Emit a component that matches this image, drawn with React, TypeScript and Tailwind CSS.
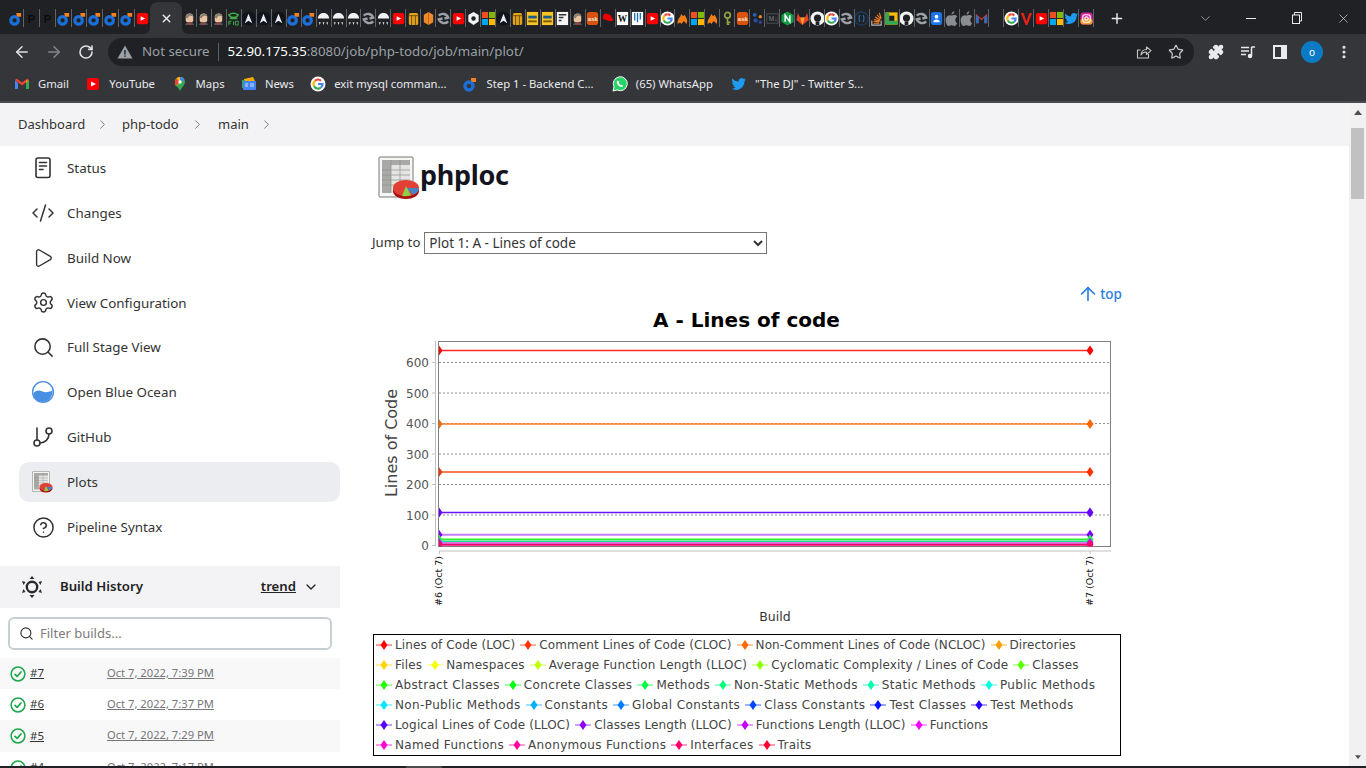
import React from 'react';
import {
  ArrowLeft,
  ArrowRight,
  ArrowUp,
  ChevronDown,
  ChevronRight,
  CircleHelp,
  CodeXml,
  GitBranch,
  MoreVertical,
  Play,
  Plus,
  Puzzle,
  RotateCw,
  Search,
  Settings,
  Star,
  X,
} from 'lucide-react';

type Kind = string;

// tab strip favicons, left of the active tab and right of it
const leftTabs: Kind[] = ['do', 'p', 'p', 'do', 'do', 'do', 'do', 'do', 'yt'];
const rightTabs: Kind[] = [
  'jenkins', 'jenkins', 'jenkins', 'frog', 'arch', 'arch', 'arch', 'do', 'do', 'dome', 'dome', 'dome', 'swirl', 'dome',
  'yt', 'barrel', 'cylinder', 'swirl', 'yt', 'gear', 'ms', 'arch', 'barrel', 'card', 'card', 'doc', 'jenkins', 'ask',
  'redhat', 'wiki', 'blueDoc', 'yt', 'g', 'flame', 'ms', 'flame', 'key', 'ask', 'dots', 'darkM', 'nginx', 'fox', 'github',
  'g', 'swirl', 'brackets', 'stack', 'gsquare', 'github', 'swirl', 'person', 'apple', 'apple', 'gmail2', 'blank', 'g',
  'vee', 'yt', 'ms', 'twitter', 'insta',
];

function Favicon({ kind, size = 16 }: { kind: Kind; size?: number }) {
  const body = () => {
    switch (kind) {
      case 'do':
        return (
          <>
            <circle cx="7" cy="10" r="4" fill="none" stroke="#1b6fd8" strokeWidth="3.4" />
            <path d="M9 2h5v4h-3a2 2 0 0 1-2-2z" fill="#f5801f" />
          </>
        );
      case 'p':
        return <text x="4" y="13" fontSize="12" fontWeight="700" fill="#0b0c0e" fontFamily="Liberation Sans">P</text>;
      case 'yt':
        return (
          <>
            <rect x="2" y="2" width="12" height="12" rx="2" fill="#f00" />
            <path d="M6 5.5l5 2.5-5 2.5z" fill="#fff" />
          </>
        );
      case 'jenkins':
        return (
          <>
            <path d="M4 6c0-4 8-5 8 0v4c0 3-8 3-8 0z" fill="#e9c4a4" />
            <path d="M4 7c0-5 8-6 8-1-3-2-5-1-6 2z" fill="#8a8070" />
            <path d="M3 15l2-3h6l2 3z" fill="#555" />
            <path d="M7 12h2v3H7z" fill="#c33" />
          </>
        );
      case 'frog':
        return (
          <>
            <path d="M3 4c3-2 7-2 10 0-1 2-3 3-5 3S4 6 3 4zM4 8h8" fill="none" stroke="#3fae49" strokeWidth="1.6" />
            <path d="M3 11v4m0-4h3m-3 2h2m3-2v4m2-4h3v4h-3z" fill="none" stroke="#3fae49" strokeWidth="1" />
          </>
        );
      case 'arch':
        return (
          <>
            <circle cx="8" cy="8" r="7.4" fill="#11151b" />
            <path d="M8 3l4 10-4-2.5L4 13z" fill="#e8edf2" />
          </>
        );
      case 'dome':
        return (
          <>
            <path d="M2 8c0-8 12-8 12 0z" fill="#f2f2f2" />
            <path d="M3 12h2l-1 3zm4 0h2l-1 3zm4 0h2l-1 3z" fill="#e6e6e6" />
          </>
        );
      case 'swirl':
        return (
          <>
            <path d="M3 5a6 6 0 0 1 10 2l-4 1M13 11a6 6 0 0 1-10-2l4-1" fill="none" stroke="#9aa0a6" strokeWidth="2.6" />
          </>
        );
      case 'barrel':
        return (
          <>
            <rect x="3" y="2" width="10" height="13" rx="2" fill="#e2a21b" />
            <path d="M3 5h10M6 5v10M10 5v10" stroke="#6b4b08" strokeWidth="1" />
          </>
        );
      case 'cylinder':
        return (
          <>
            <path d="M3 4l5-3 5 3v8l-5 3-5-3z" fill="#ef8a2c" />
            <path d="M8 1v14" stroke="#c4661a" strokeWidth="1" />
          </>
        );
      case 'gear':
        return (
          <>
            <path d="M8 1l5.5 3.2v7.1L8 15l-5.500-3.700V4.200z" fill="#f2f2f2" />
            <circle cx="8" cy="8" r="2.400" fill="#202124" />
          </>
        );
      case 'ms':
        return (
          <>
            <rect x="1" y="1" width="6.500" height="6.500" fill="#f25022" />
            <rect x="8.500" y="1" width="6.500" height="6.500" fill="#7fba00" />
            <rect x="1" y="8.500" width="6.500" height="6.500" fill="#00a4ef" />
            <rect x="8.500" y="8.500" width="6.500" height="6.500" fill="#ffb900" />
          </>
        );
      case 'card':
        return (
          <>
            <rect x="2" y="1" width="12" height="14" fill="#f7c325" />
            <rect x="3.500" y="5" width="9" height="3" fill="#1c5d8a" />
            <rect x="3.500" y="10" width="9" height="2" fill="#7a5a10" />
          </>
        );
      case 'doc':
        return (
          <>
            <rect x="2" y="1" width="12" height="14" fill="#f4f4f4" />
            <path d="M4 4h8M4 7h5M4 10h3" stroke="#333" strokeWidth="1.600" />
          </>
        );
      case 'ask':
        return (
          <>
            <rect x="2" y="1" width="12" height="14" rx="3" fill="#d9530f" />
            <text x="3" y="11" fontSize="6.500" fontWeight="700" fill="#ffe4d0" fontFamily="Liberation Sans">ask</text>
          </>
        );
      case 'redhat':
        return <path d="M3 8c0-5 2-6 4-5s4 0 5 3c1 2 2 2 2 3 0 2-3 2-6 1-3-1-5-1-5-2z" fill="#e00" />;
      case 'wiki':
        return (
          <>
            <rect x="2" y="1" width="12" height="14" fill="#fff" />
            <text x="3" y="12" fontSize="10" fontWeight="700" fill="#111" fontFamily="Liberation Serif">W</text>
          </>
        );
      case 'blueDoc':
        return (
          <>
            <rect x="2" y="1" width="12" height="14" fill="#fff" />
            <path d="M5 2v8M8 2v10M11 2v7" stroke="#1c6fb8" strokeWidth="1.400" />
          </>
        );
      case 'g':
        return (
          <>
            <circle cx="8" cy="8" r="7.500" fill="#fff" />
            <path d="M8 3.500a4.500 4.500 0 0 1 3 1.200" fill="none" stroke="#ea4335" strokeWidth="2.200" />
            <path d="M5 4.700A4.500 4.500 0 0 0 4 10" fill="none" stroke="#fbbc05" strokeWidth="2.200" />
            <path d="M4 10a4.500 4.500 0 0 0 7 1.500" fill="none" stroke="#34a853" strokeWidth="2.200" />
            <path d="M8 8h4.500a4.500 4.500 0 0 1-1.500 3.500" fill="none" stroke="#4285f4" strokeWidth="2.200" />
            <path d="M8 3.500A4.500 4.500 0 0 0 5 4.700" fill="none" stroke="#ea4335" strokeWidth="2.200" />
          </>
        );
      case 'flame':
        return <path d="M3 14c-1-5 2-6 4-11 1 3 2 3 3 1 3 4 4 7 2 10-1-2-2-3-3-3-1 1-1 2-2 3-1-2-2-2-4 0z" fill="#f07d1a" />;
      case 'key':
        return (
          <>
            <circle cx="8" cy="4.500" r="3" fill="none" stroke="#8fa33f" strokeWidth="1.800" />
            <path d="M8 7v8m0-3h3m-3 2h2" stroke="#8fa33f" strokeWidth="1.800" />
          </>
        );
      case 'dots':
        return (
          <>
            <circle cx="5" cy="4" r="2" fill="#2466c2" />
            <circle cx="11" cy="6" r="1.800" fill="#e98a1f" />
            <circle cx="6" cy="10" r="2.200" fill="#2c4aa8" />
            <circle cx="11" cy="12" r="1.800" fill="#254a9a" />
          </>
        );
      case 'darkM':
        return (
          <>
            <rect x="2" y="3" width="12" height="10" fill="none" stroke="#4d5156" strokeWidth="1" />
            <text x="4" y="11" fontSize="7" fill="#80868b" fontFamily="Liberation Sans">M↓</text>
          </>
        );
      case 'nginx':
        return (
          <>
            <path d="M8 0.500l6.500 3.700v7.600L8 15.500l-6.500-3.700V4.200z" fill="#129a46" />
            <path d="M5.500 11.500v-7l5 7v-7" fill="none" stroke="#fff" strokeWidth="1.600" />
          </>
        );
      case 'fox':
        return (
          <>
            <path d="M8 15L1.500 9.500 3 2l2.500 5h5L13 2l1.500 7.500z" fill="#e24329" />
            <path d="M8 15L5.500 7h5z" fill="#fca326" />
          </>
        );
      case 'github':
        return (
          <>
            <circle cx="8" cy="8" r="7.500" fill="#f2f2f2" />
            <circle cx="8" cy="7.500" r="3.800" fill="#202124" />
            <path d="M6 15v-4h4v4z" fill="#202124" />
          </>
        );
      case 'brackets':
        return (
          <>
            <circle cx="8" cy="8" r="7" fill="none" stroke="#1c3a5c" strokeWidth="1.500" />
            <path d="M6.500 4.500C5 6 5 10 6.500 11.500M9.500 4.500c1.500 1.500 1.500 5.500 0 7" fill="none" stroke="#2a6fb0" strokeWidth="1.200" />
          </>
        );
      case 'stack':
        return (
          <>
            <path d="M3 10v5h10v-5" fill="none" stroke="#bcbbbb" strokeWidth="1.200" />
            <path d="M5 13h6M5 11l6 .6M5.500 9l6 1.500M6.500 6.500l5.500 3M8.500 4l4 4.500M11 2l2 6" stroke="#f48024" strokeWidth="1.200" />
          </>
        );
      case 'gsquare':
        return (
          <>
            <rect x="1.500" y="1.500" width="13" height="13" fill="#fbbc05" />
            <path d="M1.500 14.500h13v-4h-9v-9h-4z" fill="#34a853" />
            <rect x="5.500" y="5" width="5.500" height="5.500" fill="#202124" />
          </>
        );
      case 'person':
        return (
          <>
            <rect x="2" y="1" width="12" height="14" rx="3" fill="#1a73e8" />
            <circle cx="8" cy="6" r="2" fill="#fff" />
            <path d="M4.500 12c0-4 7-4 7 0z" fill="#fff" />
          </>
        );
      case 'apple':
        return (
          <>
            <path d="M8 5c2-1 5-1 6 1-3 2-2 6 0 7-1 2-2 3-3 3s-2-.7-3-.7-2 .7-3 .7C3 16 1 11 2 8c1-3 4-4 6-3z" fill="#8a8d91" />
            <path d="M8 4c0-2 1-3 3-4 0 2-1 3-3 4z" fill="#8a8d91" />
          </>
        );
      case 'gmail2':
        return (
          <>
            <path d="M2 3v10h3V7l3 3 3-3v6h3V3l-6 5z" fill="#c5392f" />
            <path d="M2 13h3V7L2 4zM14 13h-3V7l3-3z" fill="#2f6fc4" />
          </>
        );
      case 'gmail':
        return (
          <>
            <path d="M1 4v9h3V7z" fill="#4285f4" />
            <path d="M15 4v9h-3V7z" fill="#34a853" />
            <path d="M1 4l7 5.500L15 4l-1.500-1.500L8 6.500 2.500 2.500z" fill="#ea4335" />
            <path d="M12 7l3-3v0l-3 1z" fill="#fbbc05" />
          </>
        );
      case 'vee':
        return <path d="M2 2h3l3 9 3-9h3l-5 13H7z" fill="#e0231c" />;
      case 'twitter':
        return <path d="M15 3.500c-.5.300-1.100.400-1.700.500.600-.400 1-1 1.300-1.700-.600.400-1.200.600-1.900.700a3 3 0 0 0-5.100 2.700C5 5.600 2.800 4.400 1.400 2.600c-.8 1.400-.4 3.100 1 4-.500 0-1-.100-1.400-.400 0 1.500 1 2.700 2.400 3-.400.100-.900.100-1.300 0 .400 1.200 1.500 2 2.800 2.100A6 6 0 0 1 .5 12.600a8.500 8.500 0 0 0 13-7.500c.600-.400 1.100-1 1.500-1.600z" fill="#1d9bf0" />;
      case 'insta':
        return (
          <>
            <rect x="1.500" y="1.500" width="13" height="13" rx="3.500" fill="#d6249f" />
            <rect x="1.500" y="8" width="13" height="6.500" rx="3" fill="#fd9a2a" />
            <rect x="4" y="4" width="8" height="8" rx="2.400" fill="none" stroke="#fff" strokeWidth="1.200" />
            <circle cx="8" cy="8" r="1.800" fill="none" stroke="#fff" strokeWidth="1.200" />
          </>
        );
      case 'maps':
        return (
          <>
            <path d="M8 1a5 5 0 0 1 5 5c0 3-3 5-5 9-2-4-5-6-5-9a5 5 0 0 1 5-5z" fill="#34a853" />
            <path d="M8 1a5 5 0 0 1 4 2L4 10C3.500 9 3 7.500 3 6a5 5 0 0 1 5-5z" fill="#fbbc05" />
            <path d="M8 1a5 5 0 0 1 4.500 3L8 6z" fill="#4285f4" />
            <path d="M4.500 2.500L8 6 4 9.500A5 5 0 0 1 4.500 2.500z" fill="#ea4335" />
            <circle cx="8" cy="6" r="1.700" fill="#fff" />
          </>
        );
      case 'news':
        return (
          <>
            <path d="M3 3l9-2 2 4H3z" fill="#f9ab00" />
            <rect x="1" y="4" width="3" height="8" fill="#34a853" />
            <rect x="2" y="5" width="13" height="9" rx="1" fill="#4285f4" />
            <path d="M4 8h3M4 10h3M9 8h4M9 10h4" stroke="#cfe0fc" strokeWidth="1" />
          </>
        );
      case 'whatsapp':
        return (
          <>
            <path d="M1 15l1-4.200A7 7 0 1 1 5.200 14z" fill="#25d366" stroke="#fff" strokeWidth="1" />
            <path d="M5.500 4.500c-1.500 1.500-.5 3.500 1 5s3.500 2 4.700.500l-1.500-1.300-1 .500C7.700 8.300 7 7.700 6.700 6.700l.6-.9z" fill="#fff" />
          </>
        );
      default:
        return null;
    }
  };
  return (
    <svg width={size} height={size} viewBox="0 0 16 16" className="shrink-0">
      {body()}
    </svg>
  );
}

function TabSlot({ kind, wide }: { kind: Kind; wide?: boolean }) {
  return (
    <div className={wide ? 'flex h-full w-[15.9px] items-center justify-center' : 'flex h-full w-[14.96px] items-center justify-center'}>
      <div className="flex h-[18px] w-full items-center justify-center border-r border-[#5f6368]">
        <div className="flex w-[14px] justify-center overflow-hidden">
          <Favicon kind={kind} size={15} />
        </div>
      </div>
    </div>
  );
}

function TabStrip() {
  return (
    <div className="flex h-[34px] shrink-0 items-center bg-[#202124] pt-[2px] pl-[8px]">
      {leftTabs.map((k, i) => (
        <TabSlot key={i} kind={k} wide />
      ))}
      <div className="relative ml-[-1px] flex h-[32px] w-[32px] items-center justify-center self-end rounded-t-[8px] bg-[#35363a]">
        <X size={13} color="#e8eaed" strokeWidth={2.5} />
        <span className="absolute bottom-0 left-[-6px] h-[6px] w-[6px] bg-[#35363a]">
          <span className="block h-full w-full rounded-br-[6px] bg-[#202124]" />
        </span>
        <span className="absolute right-[-6px] bottom-0 h-[6px] w-[6px] bg-[#35363a]">
          <span className="block h-full w-full rounded-bl-[6px] bg-[#202124]" />
        </span>
      </div>
      {rightTabs.map((k, i) => (
        <TabSlot key={i} kind={k} />
      ))}
      <div className="ml-[15px] flex w-[16px] justify-center">
        <Plus size={17} color="#e8eaed" strokeWidth={2.2} />
      </div>
      <div className="ml-auto flex h-full items-center text-[#d5d7da]">
        <div className="flex w-[46px] justify-center">
          <ChevronDown size={15} strokeWidth={1} />
        </div>
        <div className="flex w-[46px] justify-center">
          <div className="h-px w-[10px] bg-[#e8eaed]" />
        </div>
        <div className="flex w-[46px] justify-center">
          <svg width="12" height="12" viewBox="0 0 12 12" fill="none" stroke="#e8eaed">
            <rect x="1.500" y="3" width="7" height="8.500" />
            <path d="M3.500 3V.5h7v8.500H8.500" />
          </svg>
        </div>
        <div className="flex w-[46px] justify-center">
          <X size={15} strokeWidth={1} color="#e8eaed" />
        </div>
      </div>
    </div>
  );
}

function Toolbar() {
  return (
    <div className="flex h-[33px] shrink-0 items-center bg-[#35363a] pt-[3px]">
      <div className="flex w-[108px] items-center pl-[13px] text-[#dee1e6]">
        <ArrowLeft size={18} strokeWidth={2} />
        <ArrowRight size={18} strokeWidth={2} className="ml-[14px] text-[#83868a]" />
        <RotateCw size={16} strokeWidth={2.4} className="ml-[15px]" />
      </div>
      <div className="flex h-[28px] w-[1086px] items-center rounded-full bg-[#202124] pl-[9px] text-[13.300px]">
        <svg width="16" height="16" viewBox="0 0 16 16">
          <path d="M8 1.500l7.500 13H.5z" fill="#9aa0a6" />
          <path d="M8 6v4.500M8 11.500v1.300" stroke="#202124" strokeWidth="1.400" />
        </svg>
        <span className="ml-[9px] text-[#9aa0a6]">Not secure</span>
        <span className="mx-[8px] h-[18px] w-px bg-[#5f6368]" />
        <span className="ml-[1px] text-white">52.90.175.35</span>
        <span className="text-[#9aa0a6]">:8080/job/php-todo/job/main/plot/</span>
        <div className="ml-auto flex items-center pr-[10px] text-[#c4c7c5]">
          <svg width="16" height="16" viewBox="0 0 16 16" fill="none" stroke="#c4c7c5" strokeWidth="1.100" strokeLinejoin="round">
            <path d="M12.500 10v4h-11V6h3" />
            <path d="M5 11c0-3.500 2.500-5.500 5.500-5.500V3L15 6.700l-4.500 3.800V8C8 8 6 9 5 11z" />
          </svg>
          <Star size={16} strokeWidth={1.8} className="ml-[16px]" />
        </div>
      </div>
      <div className="flex flex-1 items-center text-[#e8eaed]">
        <Puzzle size={16} fill="#e8eaed" className="ml-[14px]" />
        <svg width="16" height="16" viewBox="0 0 16 16" className="ml-[16px]" stroke="#e8eaed" fill="none" strokeWidth="1.500">
          <path d="M1 3.500h8M1 7h8M1 10.500h5M11.500 3v9" />
          <circle cx="10" cy="12" r="1.500" fill="#e8eaed" />
          <path d="M11.500 3H15" />
        </svg>
        <svg width="14" height="14" viewBox="0 0 14 14" className="ml-[17px]">
          <path d="M0 0h14v14H0z" fill="#e8eaed" />
          <path d="M2 2h6v10H2z" fill="#35363a" />
        </svg>
        <div className="ml-[14px] flex h-[22px] w-[22px] items-center justify-center rounded-full bg-[#0b7ac4] text-[10px] text-white">o</div>
        <MoreVertical size={16} strokeWidth={2.6} className="ml-[13px]" />
      </div>
    </div>
  );
}

const bookmarks = [
  { icon: 'gmail', label: 'Gmail', w: 'w-[31px]' },
  { icon: 'yt', label: 'YouTube', w: 'w-[46px]' },
  { icon: 'maps', label: 'Maps', w: 'w-[29px]' },
  { icon: 'news', label: 'News', w: 'w-[29px]' },
  { icon: 'g', label: 'exit mysql comman...', w: 'w-[112px]' },
  { icon: 'do', label: 'Step 1 - Backend C...', w: 'w-[109px]' },
  { icon: 'whatsapp', label: '(65) WhatsApp', w: 'w-[79px]' },
  { icon: 'twitter', label: '"The DJ" - Twitter S...', w: 'w-[111px]' },
];

function Bookmarks() {
  return (
    <div className="flex h-[34px] shrink-0 items-center gap-[16.300px] bg-[#35363a] pl-[14px] text-[11.300px] text-[#e8eaed]">
      {bookmarks.map((b) => (
        <div key={b.label} className="flex items-center gap-[8px]">
          <Favicon kind={b.icon} />
          <span className={`${b.w} whitespace-nowrap`}>{b.label}</span>
        </div>
      ))}
    </div>
  );
}

function PlotIcon({ size }: { size: number }) {
  return (
    <svg width={size} height={size} viewBox="0 0 44 44" className="shrink-0">
      <rect x="1" y="1" width="34" height="40" rx="1" fill="#f6f6f4" stroke="#77786f" strokeWidth="1" />
      <rect x="4" y="4" width="28" height="33" fill="#e4e4e2" />
      <rect x="4" y="4" width="9" height="33" fill="#a9a9a7" />
      <rect x="4" y="4" width="28" height="5" fill="#a9a9a7" />
      <path d="M4 14h28M4 19h28M4 24h28M4 29h28M13 4v33M22 4v33" stroke="#8f8f8d" strokeWidth="0.700" />
      <ellipse cx="28" cy="35" rx="13" ry="8" fill="#a80f0f" />
      <ellipse cx="28" cy="32" rx="13" ry="8" fill="#e24037" />
      <path d="M28 32l13 0a13 8 0 0 1-6 6.800z" fill="#4a82c4" />
      <path d="M28 30l5 9.500a13 8 0 0 1-9 .5z" fill="#8ed04a" />
    </svg>
  );
}

function StatusIcon() {
  return (
    <svg width="24" height="24" viewBox="0 0 24 24" fill="none" stroke="#333" strokeWidth="1.600" strokeLinecap="round">
      <rect x="5" y="2" width="14" height="19.500" rx="2" />
      <path d="M8.500 6.500h7M8.500 10h7M8.500 13.500h3.500" />
    </svg>
  );
}

function OceanIcon() {
  return (
    <svg width="24" height="24" viewBox="0 0 24 24">
      <circle cx="12" cy="12" r="10.400" fill="#fff" stroke="#4a90e2" strokeWidth="1.400" />
      <path d="M2.500 13c3-3 6-3 9-1.500s6 .5 10-1c.500 6-4 11.500-9.500 11.500S2.500 18 2.500 13z" fill="#4a90e2" />
    </svg>
  );
}

const navItems = [
  { label: 'Status', icon: <StatusIcon /> },
  { label: 'Changes', icon: <CodeXml size={24} strokeWidth={1.5} color="#333" /> },
  { label: 'Build Now', icon: <Play size={22} strokeWidth={1.5} color="#333" /> },
  { label: 'View Configuration', icon: <Settings size={23} strokeWidth={1.5} color="#333" /> },
  { label: 'Full Stage View', icon: <Search size={23} strokeWidth={1.6} color="#333" /> },
  { label: 'Open Blue Ocean', icon: <OceanIcon /> },
  { label: 'GitHub', icon: <GitBranch size={24} strokeWidth={1.6} color="#333" /> },
  { label: 'Plots', icon: <PlotIcon size={22} />, active: true },
  { label: 'Pipeline Syntax', icon: <CircleHelp size={23} strokeWidth={1.6} color="#333" /> },
];

const builds = [
  { id: '#7', date: 'Oct 7, 2022, 7:39 PM', bg: 'bg-[#f8f8f8] h-[31px]' },
  { id: '#6', date: 'Oct 7, 2022, 7:37 PM', bg: 'bg-white h-[31px]' },
  { id: '#5', date: 'Oct 7, 2022, 7:29 PM', bg: 'bg-[#f8f8f8] h-[32px]' },
  { id: '#4', date: 'Oct 7, 2022, 7:17 PM', bg: 'bg-white h-[31px]' },
];

function BuildStatusIcon() {
  return (
    <svg width="16" height="16" viewBox="0 0 16 16" fill="none" stroke="#1ea64c" strokeWidth="1.500" strokeLinecap="round" strokeLinejoin="round">
      <circle cx="8" cy="8" r="6.900" />
      <path d="M5 8.300l2.100 2.100L11 6" strokeWidth="1.700" />
    </svg>
  );
}

function BuildHistoryIcon() {
  return (
    <svg width="24" height="24" viewBox="0 0 24 24" fill="#2b2b2b">
      <circle cx="12" cy="12" r="5.200" fill="none" stroke="#2b2b2b" strokeWidth="2.400" />
      <path d="M12 1l2.500 3h-5zM12 23l-2.500-3h5zM2 6l3.500 1-2 3zM22 6l-3.500 1 2 3zM2 18l3.500-1-2-3zM22 18l-3.500-1 2-3z" />
    </svg>
  );
}

function Sidebar() {
  return (
    <div className="-mt-[0.5px] w-[340px] shrink-0">
      {navItems.map((item) => (
        <div key={item.label} className="flex h-[44.900px] items-center pl-[19px]">
          <div className={item.active ? 'flex h-[40px] w-[321px] items-center rounded-[10px] bg-[#ecedf1] pl-[12px]' : 'flex h-[40px] w-[321px] items-center pl-[12px]'}>
            <div className="flex w-[24px] justify-center">{item.icon}</div>
            <span className="ml-[12px] text-[13.400px] text-[#333]">{item.label}</span>
          </div>
        </div>
      ))}
      <div className="mt-[16.500px] flex h-[42px] items-center bg-[#f3f3f6] pr-[21px] pl-[20px]">
        <BuildHistoryIcon />
        <span className="mb-px ml-[16px] text-[13.200px] font-semibold text-[#222]">Build History</span>
        <span className="mb-px ml-auto text-[13.200px] font-semibold text-[#222] underline">trend</span>
        <ChevronDown size={16} className="ml-[7px] text-[#222]" />
      </div>
      <div className="mx-[8px] mt-[9px] flex h-[33px] w-[324px] items-center rounded-[6px] border-2 border-[#c6d0d4] pl-[9px]">
        <Search size={15} strokeWidth={1.8} color="#333" />
        <span className="ml-[6px] text-[13px] text-[#7b7b7b]">Filter builds...</span>
      </div>
      <div className="mt-[8px]">
        {builds.map((b) => (
          <div key={b.id} className={`flex items-center ${b.bg}`}>
            <div className="ml-[10px]">
              <BuildStatusIcon />
            </div>
            <span className="mb-px ml-[4px] w-[77px] text-[11.500px] text-[#333] underline">{b.id}</span>
            <span className="mb-px text-[11.200px] text-[#75757a] underline">{b.date}</span>
          </div>
        ))}
      </div>
    </div>
  );
}

const yTicks = [
  { label: '600', y: 362.500 },
  { label: '500', y: 393 },
  { label: '400', y: 423.500 },
  { label: '300', y: 454 },
  { label: '200', y: 484.500 },
  { label: '100', y: 515 },
  { label: '0', y: 545.500 },
];

const series = [
  { y: 350.500, line: '#ff2a2a', marker: '#ff0000' },
  { y: 424, line: '#ff7a26', marker: '#ff6600' },
  { y: 472, line: '#ff4a1a', marker: '#ff3300' },
  { y: 512.500, line: '#6a12ff', marker: '#6600ff' },
  { y: 534.700, line: '#c77dff', marker: '#7a00ff', width: 2 },
  { y: 539.500, line: '#33ee33', marker: '#33ff33', width: 2 },
  { y: 541.500, line: '#22dd99', marker: '#22dd99' },
  { y: 543, line: '#d050e0', marker: '#cc00ff' },
  { y: 544.800, line: '#f0006a', marker: '#ff0066', width: 2 },
];

// the plot is drawn in page coordinates, shifted by the svg's own origin
function Chart() {
  const ox = 372;
  const oy = 305;
  return (
    <svg width="750" height="329" viewBox={`${ox} ${oy} 750 329`} className="block" fontFamily="DejaVu Sans, sans-serif">
      <defs>
        <clipPath id="plotArea">
          <rect x="439" y="342" width="671" height="204.500" />
        </clipPath>
      </defs>
      <text x="746.500" y="326.500" textAnchor="middle" fontSize="20" fontWeight="700" fill="#000">A - Lines of code</text>
      <rect x="438.500" y="341.500" width="672" height="205" fill="#fff" stroke="#808080" />
      <path d="M435.500 341v205M439 551h672" stroke="#c0c0c0" strokeWidth="1" />
      {yTicks.map((t) => (
        <g key={t.label}>
          <path d={`M432 ${t.y}h3`} stroke="#c0c0c0" />
          {t.label !== '0' && <path d={`M439 ${t.y}H1110`} stroke="#909090" strokeDasharray="2 2" strokeWidth="1" />}
          <text x="429" y={t.y + 4.500} textAnchor="end" fontSize="12" fill="#555">{t.label}</text>
        </g>
      ))}
      <text transform="translate(397 443) rotate(-90)" textAnchor="middle" fontSize="16" fill="#444">Lines of Code</text>
      <text transform="translate(442 581) rotate(-90)" textAnchor="middle" fontSize="9.500" fill="#111">#6 (Oct 7)</text>
      <text transform="translate(1093 581) rotate(-90)" textAnchor="middle" fontSize="9.500" fill="#111">#7 (Oct 7)</text>
      <path d="M439.500 551v3M1090 551v3" stroke="#c0c0c0" />
      <text x="775" y="621" textAnchor="middle" fontSize="12.500" fill="#333">Build</text>
      <g clipPath="url(#plotArea)">
        {series.map((s) => (
          <g key={s.y}>
            <path d={`M439 ${s.y}H1090`} stroke={s.line} strokeWidth={s.width ?? 1.300} />
            <path d={`M439 ${s.y - 5}l3.500 5-3.500 5z`} fill={s.marker} />
            <path d={`M1090 ${s.y - 5}l3.500 5-3.500 5-3.500-5z`} fill={s.marker} />
          </g>
        ))}
      </g>
    </svg>
  );
}

const legendRows: { track: string; labels: string[] }[] = [
  { track: 'tracking-[0.1px]', labels: ['Lines of Code (LOC)', 'Comment Lines of Code (CLOC)', 'Non-Comment Lines of Code (NCLOC)', 'Directories'] },
  { track: 'tracking-[0.17px]', labels: ['Files', 'Namespaces', 'Average Function Length (LLOC)', 'Cyclomatic Complexity / Lines of Code', 'Classes'] },
  { track: 'tracking-[0.34px]', labels: ['Abstract Classes', 'Concrete Classes', 'Methods', 'Non-Static Methods', 'Static Methods', 'Public Methods'] },
  { track: 'tracking-[0.37px]', labels: ['Non-Public Methods', 'Constants', 'Global Constants', 'Class Constants', 'Test Classes', 'Test Methods'] },
  { track: 'tracking-[0.15px]', labels: ['Logical Lines of Code (LLOC)', 'Classes Length (LLOC)', 'Functions Length (LLOC)', 'Functions'] },
  { track: 'tracking-[0.33px]', labels: ['Named Functions', 'Anonymous Functions', 'Interfaces', 'Traits'] },
];

function LegendMarker({ color }: { color: string }) {
  return (
    <svg width="16" height="12" viewBox="0 0 16 12" className="shrink-0">
      <path d="M0 6h16" stroke={color} strokeOpacity="0.600" strokeWidth="1.300" />
      <path d="M8 1l3.500 5L8 11 4.500 6z" fill={color} />
    </svg>
  );
}

function Legend() {
  let n = 0;
  return (
    <div className="ml-px h-[122px] w-[748px] border border-black pl-[2px] font-['DejaVu_Sans',sans-serif] text-[12px] text-[#444]">
      {legendRows.map((row, r) => (
        <div key={r} className={`flex h-[20px] items-center gap-[5px] ${row.track}`}>
          {row.labels.map((label) => {
            // legend colours walk round the hue wheel, one step per series
            const color = `hsl(${(n++ * 360) / 29} 100% 50%)`;
            return (
              <div key={label} className="flex items-center gap-[3px] whitespace-nowrap">
                <LegendMarker color={color} />
                <span>{label}</span>
              </div>
            );
          })}
        </div>
      ))}
    </div>
  );
}

function Scrollbar() {
  return (
    <div className="flex h-full w-[17px] shrink-0 flex-col items-center bg-[#f1f1f1] pt-[7px] pb-[7px]">
      <svg width="8" height="5" viewBox="0 0 8 5">
        <path d="M4 0l4 5H0z" fill="#505050" />
      </svg>
      <div className="mt-[13px] h-[71px] w-[13px] bg-[#c1c1c1]" />
      <svg width="6" height="4" viewBox="0 0 8 5" className="mt-auto">
        <path d="M4 5L0 0h8z" fill="#505050" />
      </svg>
    </div>
  );
}

export default function App() {
  return (
    <div className="flex h-screen w-screen flex-col overflow-hidden bg-white font-['Noto_Sans',sans-serif]">
      <TabStrip />
      <Toolbar />
      <Bookmarks />
      <div className="h-[2px] shrink-0 bg-[#4a4b4f]" />
      <div className="flex min-h-0 flex-1">
        <div className="flex min-w-0 flex-1 flex-col">
          <div className="flex h-[43px] shrink-0 items-center bg-[#f3f3f5] pl-[18px] text-[13px] text-[#333]">
            <span className="w-[66px]">Dashboard</span>
            <ChevronRight size={15} strokeWidth={1.5} className="ml-[11px] text-[#777]" />
            <span className="ml-[12px] w-[58px]">php-todo</span>
            <ChevronRight size={15} strokeWidth={1.5} className="ml-[10px] text-[#777]" />
            <span className="ml-[13px] w-[30px]">main</span>
            <ChevronRight size={15} strokeWidth={1.5} className="ml-[11px] text-[#777]" />
          </div>
          <div className="flex min-h-0 flex-1 overflow-hidden">
            <Sidebar />
            <div className="min-w-0 flex-1 overflow-hidden pl-[32px]">
              <div className="mt-[10px] ml-[6px] flex h-[44px] items-center">
                <PlotIcon size={44} />
                <h1 className="mb-[7px] -ml-[2px] text-[27px] leading-none font-bold tracking-[-0.3px] text-[#14141f]">phploc</h1>
              </div>
              <div className="mt-[32px] flex h-[22px] items-center text-[13.200px] text-[#333]">
                <span>Jump to</span>
                <select defaultValue="a" className="ml-[4px] h-[22px] w-[343px] appearance-auto border border-[#767676] bg-white pl-0 text-[13.500px] text-[#333]">
                  <option value="a">Plot 1: A - Lines of code</option>
                </select>
              </div>
              <div className="mt-[29px] flex h-[22px] w-[750px] items-center justify-end text-[13.500px] font-medium text-[#2b7de0]">
                <ArrowUp size={22} strokeWidth={1.8} />
                <span className="ml-[1px]">top</span>
              </div>
              <Chart />
              <Legend />
            </div>
          </div>
        </div>
        <Scrollbar />
      </div>
      <div className="flex h-[2px] shrink-0 bg-[#202124]">
        <div className="w-[406px]" />
        <div className="w-[36px] bg-[#4d4d4d]" />
      </div>
    </div>
  );
}
